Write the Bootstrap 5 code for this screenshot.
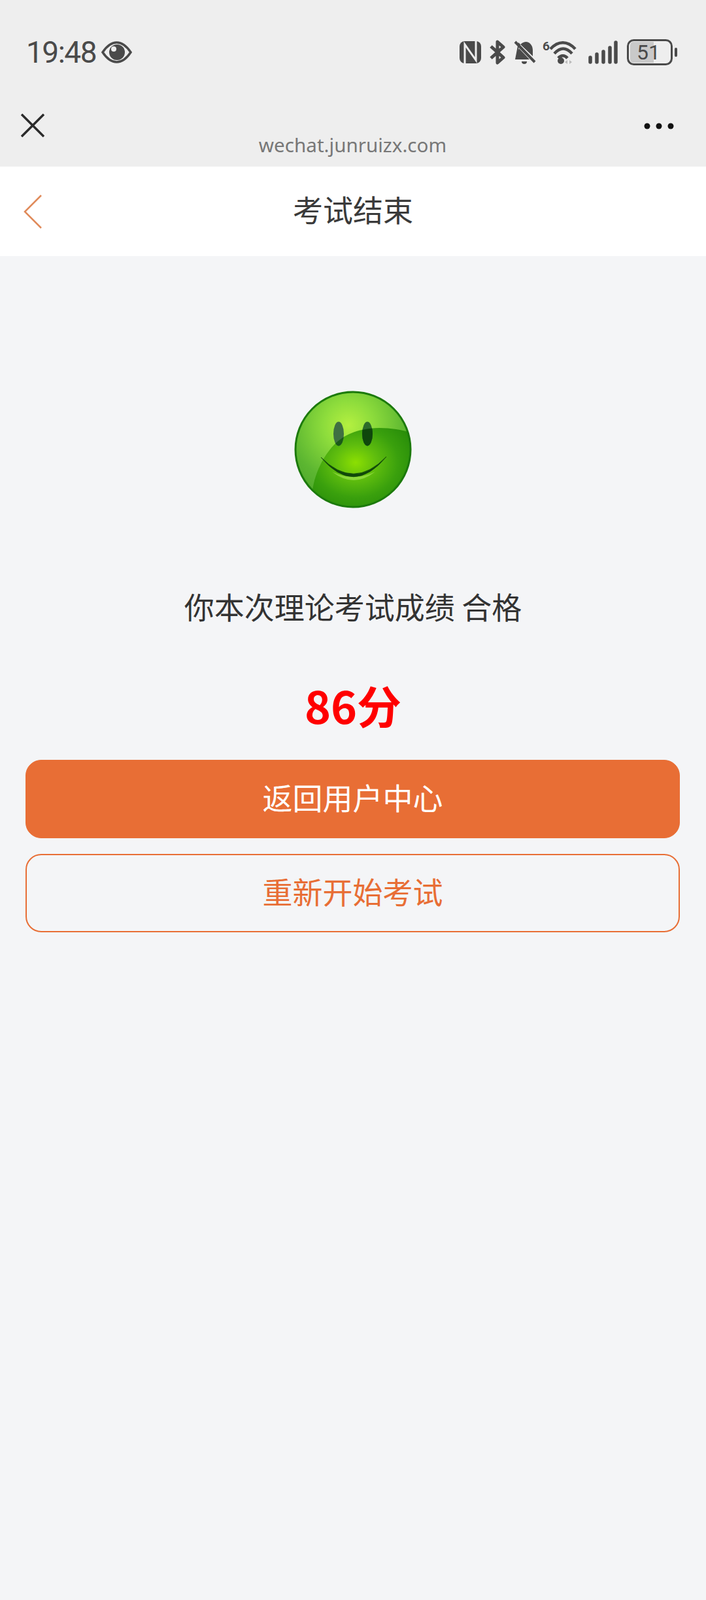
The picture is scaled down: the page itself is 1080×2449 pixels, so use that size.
<!DOCTYPE html>
<html lang="zh-CN">
<head>
  <meta charset="UTF-8">
  <meta name="viewport" content="width=device-width, initial-scale=1.0">
  <title>考试结束</title>
  <link href="https://cdn.jsdelivr.net/npm/bootstrap@5.3.0/dist/css/bootstrap.min.css" rel="stylesheet">
  <style>
    body { background: #f4f5f7; font-family: "Noto Sans CJK SC", "Noto Sans", sans-serif; color: #333; min-height: 2449px; }
    .phone-top { background: #eeeeee; height: 255px; }
    .status-row { height: 60px; margin-top: 50px; padding: 0 44px 0 40px; }
    .clock { font-family: Roboto, sans-serif; font-size: 46px; letter-spacing: -1.500px; line-height: 60px; color: #4a4a4a; }
    .browser-row { height: 145px; padding: 64px 49px 0 32px; }
    .site-url { font-family: "Noto Sans", sans-serif; font-size: 29.600px; line-height: 40px; color: #777; margin: 28px 0 0 26px; }
    .more-dots { margin-top: 14px; }
    .title-bar { height: 137px; background: #fff; padding: 0 36px 8px; }
    .title-text { font-size: 46px; color: #3a3a3a; }
    .result-face { margin-top: 206px; }
    .result-line { font-size: 46px; line-height: 60px; margin-top: 119px; color: #333; }
    .result-score { font-size: 68px; line-height: 80px; margin-top: 82px; color: #f00; font-weight: 700; }
    .action-wrap { padding: 44px 40px 0 39px; }
    .btn-exam { height: 120px; border-radius: 24px; font-size: 46px; line-height: 1; padding-bottom: 14px; display: flex; align-items: center; justify-content: center; }
    .btn-exam-solid { background: #e86e35; border: 1px solid #e86e35; color: #fff; }
    .btn-exam-line { background: transparent; border: 2px solid #e86e35; color: #e86e35; }
  </style>
</head>
<body>

<!-- 手机状态栏 + 微信顶部 -->
<div class="phone-top d-flex flex-column">
  <div class="status-row d-flex justify-content-between align-items-center">
    <div class="d-flex align-items-center gap-2">
      <span class="clock">19:48</span>
      <svg width="47" height="34" viewBox="0 0 47 34">
        <path d="M2 17C10 5 17 2 23.500 2S37 5 45 17C37 29 30 32 23.500 32S10 29 2 17Z" fill="none" stroke="#4a4a4a" stroke-width="3.500"/>
        <circle cx="24" cy="17" r="12" fill="#4a4a4a"/>
        <circle cx="19" cy="12" r="4" fill="#eee"/>
      </svg>
    </div>
    <div class="d-flex align-items-center">
      <svg width="33" height="34" viewBox="0 0 33 34" class="me-2">
        <rect width="33" height="34" rx="8" fill="#4a4a4a"/>
        <path d="M8 34V5L25 29V0" fill="none" stroke="#eee" stroke-width="3"/>
      </svg>
      <svg width="26" height="38" viewBox="0 0 26 38" class="ms-1" style="margin-right:12px">
        <path d="M3 10L22 27L13 35V3L22 11L3 28" fill="none" stroke="#4a4a4a" stroke-width="5" stroke-linejoin="round"/>
      </svg>
      <svg width="34" height="36" viewBox="0 0 34 36" style="margin-right:10px">
        <path d="M2 29C7 26 7 20 7 15C7 7 13 2 19 2C26 3 29 9 29 15V24L7 3Z M2 29H24L8 12Z" fill="#4a4a4a"/>
        <path d="M12 32H20A4 4 0 0 1 12 32Z" fill="#4a4a4a"/>
        <path d="M2 2L32 33" stroke="#4a4a4a" stroke-width="4"/>
      </svg>
      <svg width="52" height="44" viewBox="0 0 52 44" style="margin-right:18px">
        <text x="0" y="19" font-family="Roboto, sans-serif" font-size="19" font-weight="700" fill="#4a4a4a">6</text>
        <g transform="translate(0 3)">
          <path d="M12 14C24 1 38 1 50 14M18 21C27 11 36 11 45 21M24 28C28 23 34 23 38 28" fill="none" stroke="#4a4a4a" stroke-width="4.500"/>
          <circle cx="28" cy="32" r="5" fill="#4a4a4a"/>
          <path d="M38 31L34 34L38 37ZM41 31L45 34L41 37Z" fill="#bbb"/>
        </g>
      </svg>
      <svg width="45" height="36" viewBox="0 0 45 36" style="margin-right:14px">
        <g fill="none" stroke="#4a4a4a" stroke-width="5.500" stroke-linecap="round">
          <path d="M3 26V33M13 21V33M23 17V33M33 11V33M42 3V33"/>
        </g>
      </svg>
      <svg width="77" height="40" viewBox="0 0 77 40">
        <rect x="1.500" y="1.500" width="67" height="37" rx="9" fill="none" stroke="#4a4a4a" stroke-width="3"/>
        <path d="M5 9A5 5 0 0 1 10 4H41V36H10A5 5 0 0 1 5 31Z" fill="#c9c9c9"/>
        <text x="33" y="31" text-anchor="middle" font-family="Roboto, sans-serif" font-size="32" fill="#4a4a4a">51</text>
        <rect x="73" y="13" width="4" height="14" rx="2" fill="#4a4a4a"/>
      </svg>
    </div>
  </div>
  <div class="browser-row d-flex justify-content-between align-items-start">
    <svg width="36" height="36" viewBox="0 0 36 36">
      <path d="M1 1L35 35M35 1L1 35" stroke="#2b2b2b" stroke-width="3.500"/>
    </svg>
    <span class="site-url">wechat.junruizx.com</span>
    <svg width="46" height="10" viewBox="0 0 46 10" class="more-dots">
      <circle cx="5" cy="5" r="4.500" fill="#111"/>
      <circle cx="23" cy="5" r="4.500" fill="#111"/>
      <circle cx="41" cy="5" r="4.500" fill="#111"/>
    </svg>
  </div>
</div>

<!-- 标题栏 -->
<div class="title-bar position-relative d-flex align-items-center justify-content-center">
  <svg class="position-absolute top-50 translate-middle-y" style="left:36px" width="28" height="52" viewBox="0 0 28 52">
    <path d="M27 1L2 26L27 51" fill="none" stroke="#e08a5a" stroke-width="2.500"/>
  </svg>
  <span class="title-text">考试结束</span>
</div>

<!-- 成绩 -->
<div class="text-center">
  <svg class="result-face" width="180" height="180" viewBox="0 0 180 180">
    <defs>
      <radialGradient id="faceBase" cx="46%" cy="29%" r="72%">
        <stop offset="0" stop-color="#b4f040"/>
        <stop offset="0.3" stop-color="#8ddc3c"/>
        <stop offset="0.7" stop-color="#5cb631"/>
        <stop offset="1" stop-color="#4ba52a"/>
      </radialGradient>
      <radialGradient id="faceLow" cx="44%" cy="43%" r="62%">
        <stop offset="0" stop-color="#8cdf02"/>
        <stop offset="0.35" stop-color="#5fbd0e"/>
        <stop offset="0.7" stop-color="#3aa00d"/>
        <stop offset="1" stop-color="#2a8f0a"/>
      </radialGradient>
      <clipPath id="faceClip"><circle cx="90" cy="90" r="88"/></clipPath>
      <clipPath id="lowClip"><path d="M28 152C32 125 45 100 60 84C75 68 95 58 130 57C148 57 165 60 178 64V180H28Z"/></clipPath>
    </defs>
    <circle cx="90" cy="90" r="88" fill="url(#faceBase)"/>
    <g clip-path="url(#faceClip)">
      <path d="M28 152C32 125 45 100 60 84C75 68 95 58 130 57C148 57 165 60 178 64V180H28Z" fill="url(#faceLow)"/>
    </g>
    <circle cx="90" cy="90" r="88" fill="none" stroke="#1c7a0c" stroke-width="3"/>
    <ellipse cx="68" cy="66" rx="8" ry="18.500" fill="#3f6f42"/>
    <ellipse cx="112" cy="66" rx="8" ry="18.500" fill="#2c6b2a"/>
    <g clip-path="url(#lowClip)">
      <ellipse cx="68" cy="66" rx="8" ry="18.500" fill="#1a5a18"/>
      <ellipse cx="112" cy="66" rx="8" ry="18.500" fill="#0f470c"/>
    </g>
    <path d="M58 124Q91 150 124 124Q91 140 58 124Z" fill="#a6e85a" opacity="0.6"/>
    <path d="M41 102Q91 153 141 101Q91 162 41 102Z" fill="#10480a" stroke="#10480a" stroke-width="0.800"/>
  </svg>
  <div class="result-line">你本次理论考试成绩 合格</div>
  <div class="result-score">86分</div>
</div>

<div class="action-wrap d-flex flex-column gap-4">
  <a href="#" class="btn btn-exam btn-exam-solid">返回用户中心</a>
  <a href="#" class="btn btn-exam btn-exam-line">重新开始考试</a>
</div>

<script src="https://cdn.jsdelivr.net/npm/bootstrap@5.3.0/dist/js/bootstrap.bundle.min.js"></script>
</body>
</html>
